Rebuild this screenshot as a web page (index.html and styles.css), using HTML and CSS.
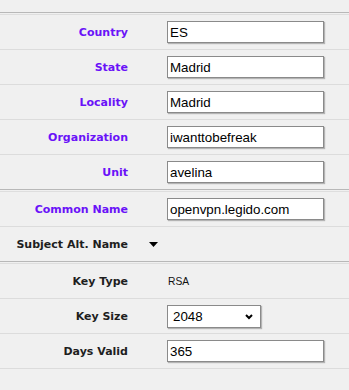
FILE: index.html
```html
<!DOCTYPE html>
<html lang="en">
<head>
    <meta charset="UTF-8">
    <meta name="viewport" content="width=device-width, initial-scale=1.0">
    <title>Certificate</title>
    <link rel="stylesheet" href="styles.css">
</head>
<body>
    <div class="head"><span>Email</span></div>

    <div class="section">
        <div class="row">
            <label class="label req" for="country">Country</label>
            <input class="field" type="text" id="country" value="ES">
        </div>
        <div class="row">
            <label class="label req" for="state">State</label>
            <input class="field" type="text" id="state" value="Madrid">
        </div>
        <div class="row">
            <label class="label req" for="locality">Locality</label>
            <input class="field" type="text" id="locality" value="Madrid">
        </div>
        <div class="row">
            <label class="label req" for="org">Organization</label>
            <input class="field" type="text" id="org" value="iwanttobefreak">
        </div>
        <div class="row">
            <label class="label req" for="unit">Unit</label>
            <input class="field" type="text" id="unit" value="avelina">
        </div>
    </div>

    <div class="section">
        <div class="row">
            <label class="label req" for="cn">Common Name</label>
            <input class="field" type="text" id="cn" value="openvpn.legido.com">
        </div>
        <div class="row">
            <span class="label">Subject Alt. Name</span>
            <svg class="toggle" width="9" height="5" viewBox="0 0 9 5"><path d="M0 0h9L4.5 5z" fill="#000"/></svg>
        </div>
    </div>

    <div class="section">
        <div class="row">
            <span class="label">Key Type</span>
            <span class="value">RSA</span>
        </div>
        <div class="row">
            <label class="label" for="keysize">Key Size</label>
            <div class="select">
                <select id="keysize">
                    <option>1024</option>
                    <option selected>2048</option>
                    <option>4096</option>
                </select>
                <svg class="chevron" width="8" height="6" viewBox="0 0 8 6"><path d="M1 1l3 3 3-3" fill="none" stroke="#000" stroke-width="2"/></svg>
            </div>
        </div>
        <div class="row">
            <label class="label" for="days">Days Valid</label>
            <input class="field" type="text" id="days" value="365">
        </div>
        <div class="row"></div>
    </div>
</body>
</html>
```

FILE: styles.css
```css
body {
    margin: 0;
    background: #f0f0f0;
    font-family: "DejaVu Sans", Verdana, sans-serif;
    color: #222;
}
.head {
    height: 12px;
    overflow: hidden;
    display: grid;
    grid-template-columns: 125px;
}
.head span {
    margin-top: -9px;
    line-height: 12px;
    text-align: right;
    font-size: 11px;
    font-weight: bold;
    color: #fff;
}
.section {
    border-top: 1px solid #b8b8b8;
    padding-top: 1px;
}
.row {
    display: grid;
    grid-template-columns: 128px 39px 157px;
    align-items: center;
    height: 34px;
    border-top: 1px solid #dcdcdc;
}
.section .row:first-child {
    border-top-color: #dedede;
}
.label {
    grid-column: 1;
    text-align: right;
    font-size: 11px;
    font-weight: bold;
    color: #1e1e1e;
}
.label.req {
    color: #6a12f8;
}
.field {
    grid-column: 3;
    box-sizing: border-box;
    width: 157px;
    height: 22px;
    margin: 0;
    padding: 1px 2px;
    border: 1px solid #8a8a8a;
    background: #fff;
    box-shadow: 1px 1px 1px rgba(0, 0, 0, 0.25);
    font-family: "Liberation Sans", Arial, sans-serif;
    font-size: 13.33px;
    color: #000;
    outline: none;
}
.toggle {
    grid-column: 2;
    margin-left: 21px;
}
.value {
    grid-column: 3;
    padding-left: 1px;
    font-family: "Liberation Sans", Arial, sans-serif;
    font-size: 10.3px;
    color: #111;
}
.select {
    grid-column: 3;
    position: relative;
    width: 94px;
    height: 23px;
}
.select select {
    appearance: none;
    -webkit-appearance: none;
    box-sizing: border-box;
    width: 94px;
    height: 23px;
    margin: 0;
    padding: 0 0 0 5px;
    border: 1px solid #8a8a8a;
    border-radius: 0;
    background: #fff;
    box-shadow: 1px 1px 1px rgba(0, 0, 0, 0.25);
    font-family: "Liberation Sans", Arial, sans-serif;
    font-size: 13.33px;
    color: #000;
    outline: none;
}
.chevron {
    position: absolute;
    left: 78px;
    top: 9px;
    pointer-events: none;
}
```
